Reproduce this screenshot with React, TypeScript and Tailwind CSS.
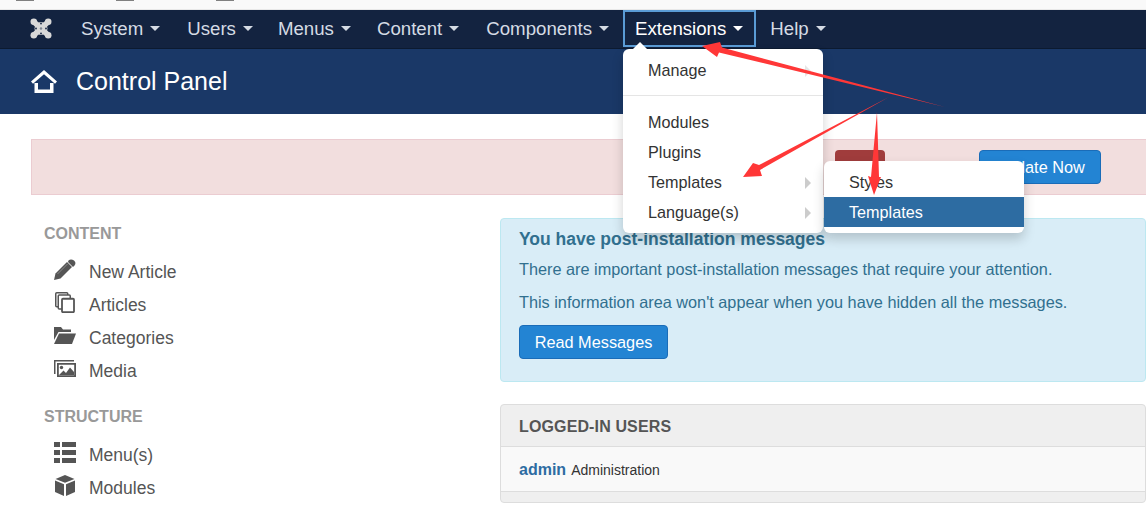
const font = { fontFamily: '"Liberation Sans", Arial, sans-serif' };

function Caret({ className }: { className: string }) {
  return <span className={`ml-[7px] inline-block h-0 w-0 border-x-[5px] border-t-[5px] border-x-transparent ${className}`} />;
}

function NavItem({ label, ml }: { label: string; ml: string }) {
  return (
    <div className={`flex items-center text-[18.67px] text-[#d5dbe4] ${ml}`}>
      {label}
      <Caret className="border-t-[#d5dbe4]" />
    </div>
  );
}

function JoomlaIcon() {
  return (
    <svg width="22" height="21" viewBox="0 0 22 21" className="ml-[30px] block">
      <g fill="none" stroke="#d8d8d8" strokeLinecap="round">
        <path d="M4 4 18 17M18 4 4 17" strokeWidth="5.500" />
        <circle cx="11" cy="10.500" r="4.500" strokeWidth="4" />
      </g>
      <circle cx="3.800" cy="3.800" r="3.300" fill="#d8d8d8" />
      <circle cx="18.200" cy="3.800" r="3.300" fill="#d8d8d8" />
      <circle cx="3.800" cy="17.200" r="3.300" fill="#d8d8d8" />
      <circle cx="18.200" cy="17.200" r="3.300" fill="#d8d8d8" />
      <g fill="#132340">
        <circle cx="11" cy="5.500" r="0.900" />
        <circle cx="11" cy="15.500" r="0.900" />
        <circle cx="6" cy="10.500" r="0.900" />
        <circle cx="16" cy="10.500" r="0.900" />
        <circle cx="11" cy="10.500" r="1.200" fill="#7f8793" />
      </g>
    </svg>
  );
}

function HomeIcon() {
  return (
    <svg width="26" height="23" viewBox="0 0 26 23" className="block">
      <path d="M13 0 26 11.500l-2 2.200L13 4.200 2 13.700l-2-2.200z" fill="#fff" />
      <path d="M3.500 13h3.500v6.500h12V13h3.500v10h-19z" fill="#fff" />
    </svg>
  );
}

const c = "#555";

function PencilIcon() {
  return (
    <svg width="22" height="21" viewBox="0 0 22 21" className="block">
      <path d="M0 21 1.500 14.500 13 3l5 5L6.500 19.500z" fill={c} />
      <path d="M14.500 1.500C16 0 18 0 20 1.500 21.800 3.300 21.800 5 20.500 6.500L19 8l-5-5z" fill={c} />
      <path d="M3.500 15 13.500 5" stroke="#8a8a8a" strokeWidth="1" />
    </svg>
  );
}

function CopyIcon() {
  return (
    <svg width="20" height="21" viewBox="0 0 20 21" className="ml-[1px] block">
      <rect x="0.750" y="0.750" width="12" height="14" rx="1" fill="#fff" stroke={c} strokeWidth="1.500" />
      <rect x="3.250" y="3" width="12" height="14" rx="1" fill="#fff" stroke={c} strokeWidth="1.500" />
      <rect x="7" y="6.750" width="12" height="13.500" rx="1" fill="#fff" stroke={c} strokeWidth="1.800" />
    </svg>
  );
}

function FolderIcon() {
  return (
    <svg width="22" height="17" viewBox="0 0 22 17" className="block">
      <path d="M0 0h7l2 2.500h8V5H4.500L0 13z" fill={c} />
      <path d="M5 6.500h17L18 17H0z" fill={c} />
    </svg>
  );
}

function ImagesIcon() {
  return (
    <svg width="22" height="17" viewBox="0 0 22 17" className="block">
      <path d="M0 0h20v1.500H1.500V14H0z" fill={c} />
      <path fillRule="evenodd" d="M3 3h19v14H3zM4.800 4.800v10.400h15.400V4.800z" fill={c} />
      <circle cx="7.500" cy="7.500" r="1.700" fill={c} />
      <path d="M5 15l4.500-4.500 2.500 2.500 4-5.500 4 4.500V15z" fill={c} />
    </svg>
  );
}

function ListIcon() {
  return (
    <svg width="22" height="21" viewBox="0 0 22 21" className="block">
      <path d="M0 0h6v5H0zM8 0h14v5H8zM0 8h6v5H0zM8 8h14v5H8zM0 16h6v5H0zM8 16h14v5H8z" fill={c} />
    </svg>
  );
}

function CubeIcon() {
  return (
    <svg width="20" height="21" viewBox="0 0 20 21" className="ml-[1px] block">
      <path d="M10 0 19.500 4 10 7.800 0.500 4z" fill={c} />
      <path d="M0 5.500 9 9.300V21L0 17z" fill={c} />
      <path d="M20 5.500 11 9.300V21L20 17z" fill={c} />
    </svg>
  );
}

function SideLink({ icon, label }: { icon: React.ReactNode; label: string }) {
  return (
    <div className="flex h-[33px] items-center text-[17.500px] text-[#555]">
      <span className="flex h-[33px] w-[45px] items-center pl-[10px]">
        <span className="-mt-[6px] block">{icon}</span>
      </span>
      {label}
    </div>
  );
}

function MenuItem({ label, arrow, active, faint, sub }: { label: string; arrow?: boolean; active?: boolean; faint?: boolean; sub?: boolean }) {
  return (
    <div className={`relative flex h-[30px] items-center pl-[25px] text-[16.200px] ${sub ? "" : "pb-[2px]"} ${active ? "bg-[#2d6ca2] text-white" : "text-[#333]"}`}>
      {label}
      {arrow && (
        <span className={`absolute right-[12px] top-[9px] h-0 w-0 border-y-[6px] border-l-[6px] border-y-transparent ${faint ? "border-l-[#e6e6e6]" : "border-l-[#cccccc]"}`} />
      )}
    </div>
  );
}

export default function App() {
  return (
    <div style={font} className="relative h-[517px] w-[1146px] overflow-hidden bg-white">
      <div className="flex h-[10px] items-start gap-[82px] border-b border-[#e8e8e8] bg-[#f9f9f9] pl-[16px]">
        <span className="h-[1px] w-[18px] bg-[#808080]" />
        <span className="h-[1px] w-[18px] bg-[#808080]" />
        <span className="h-[1px] w-[18px] bg-[#808080]" />
      </div>

      <nav className="flex h-[39px] items-center border-b border-[#0c1a30] bg-[#132340] pb-[1px]">
        <JoomlaIcon />
        <NavItem label="System" ml="ml-[29px]" />
        <NavItem label="Users" ml="ml-[27px]" />
        <NavItem label="Menus" ml="ml-[25px]" />
        <NavItem label="Content" ml="ml-[26px]" />
        <NavItem label="Components" ml="ml-[27px]" />
        <div className="ml-[14px] flex h-[37px] items-center border-2 border-[#5a9bd5] pl-[10px] pr-[11px] text-[18.67px] text-white">
          Extensions
          <Caret className="border-t-white" />
        </div>
        <NavItem label="Help" ml="ml-[14px]" />
      </nav>

      <header className="flex h-[65px] items-center bg-[#1a3867] pl-[31px] text-[25px] text-white">
        <HomeIcon />
        <span className="ml-[19px]">Control Panel</span>
      </header>

      <main className="flex items-start pl-[31px] pt-[25px]">
        <div className="w-full">
          <div className="flex h-[56px] w-[1130px] items-center border border-[#ebccd1] bg-[#f2dede]">
            <div className="ml-[803px] h-[34px] w-[50px] rounded-[4px] bg-[#a03c3c]" />
            <div className="ml-[94px] flex h-[34px] w-[122px] items-center justify-center rounded-[4px] border border-[#1a6cb8] bg-[#2384d3] text-[16.300px] text-white">
              Update Now
            </div>
          </div>

          <div className="flex">
            <aside className="w-[469px] shrink-0 pl-[13px]">
              <div className="mt-[29px] text-[16px] leading-[20px] font-bold text-[#999]">CONTENT</div>
              <div className="mt-[12px]">
                <SideLink icon={<PencilIcon />} label="New Article" />
                <SideLink icon={<CopyIcon />} label="Articles" />
                <SideLink icon={<FolderIcon />} label="Categories" />
                <SideLink icon={<ImagesIcon />} label="Media" />
              </div>
              <div className="mt-[19px] text-[16px] leading-[20px] font-bold text-[#999]">STRUCTURE</div>
              <div className="mt-[12px]">
                <SideLink icon={<ListIcon />} label="Menu(s)" />
                <SideLink icon={<CubeIcon />} label="Modules" />
              </div>
            </aside>

            <section className="w-[700px] pt-[23px]">
              <div className="h-[164px] rounded-[4px] border border-[#bce8f1] bg-[#d9edf7] pl-[18px] text-[#31708f]">
                <div className="mt-[9px] text-[17.500px] leading-[22px] font-bold">You have post-installation messages</div>
                <p className="mt-[8px] text-[16.270px] leading-[22px]">There are important post-installation messages that require your attention.</p>
                <p className="mt-[11px] text-[16.270px] leading-[22px]">This information area won't appear when you have hidden all the messages.</p>
                <div className="mt-[12px] flex h-[34px] w-[149px] items-center justify-center rounded-[4px] border border-[#1a6cb8] bg-[#2384d3] text-[16.300px] text-white">
                  Read Messages
                </div>
              </div>

              <div className="mt-[22px] h-[99px] rounded-[4px] border border-[#ddd] bg-[#efefef]">
                <div className="flex h-[42px] items-center border-b border-[#ddd] pl-[18px] pt-[2px] text-[16px] font-bold tracking-[0.13px] text-[#555]">LOGGED-IN USERS</div>
                <div className="flex h-[45px] items-center border-b border-[#ddd] bg-[#f9f9f9] pl-[18px] pt-[2px]">
                  <span className="text-[16px] font-bold text-[#2d6ca2]">admin</span>
                  <span className="ml-[5px] text-[14px] text-[#333]">Administration</span>
                </div>
              </div>
            </section>
          </div>
        </div>
      </main>

      <div className="absolute left-[623px] top-[49px] w-[200px] rounded-[6px] bg-white pb-[5px] pt-[7px] shadow-[0_6px_12px_rgba(0,0,0,0.18)]">
        <span className="absolute left-[10px] top-[-7px] h-0 w-0 border-x-[7px] border-b-[7px] border-x-transparent border-b-white" />
        <MenuItem label="Manage" arrow faint />
        <div className="mb-[12px] mt-[9px] h-[1px] bg-[#e5e5e5]" />
        <MenuItem label="Modules" />
        <MenuItem label="Plugins" />
        <MenuItem label="Templates" arrow />
        <MenuItem label="Language(s)" arrow />
      </div>

      <div className="absolute left-[824px] top-[161px] w-[200px] rounded-[6px] bg-white pb-[6px] pt-[6px] shadow-[0_6px_12px_rgba(0,0,0,0.18)]">
        <MenuItem label="Styles" sub />
        <MenuItem label="Templates" active sub />
      </div>

      <svg className="absolute left-0 top-0" width="1146" height="517" viewBox="0 0 1146 517">
        <polygon points="702,46 720,42 722,47.500 945,107 719,52.500 717,57" fill="#ff3737" />
        <polygon points="743,177 753,163 759,165 889,97 760,170 762,176" fill="#ff3737" />
        <polygon points="874,195 868,176 871,177 877,112 879,177 881,177" fill="#ff3737" />
      </svg>
    </div>
  );
}
